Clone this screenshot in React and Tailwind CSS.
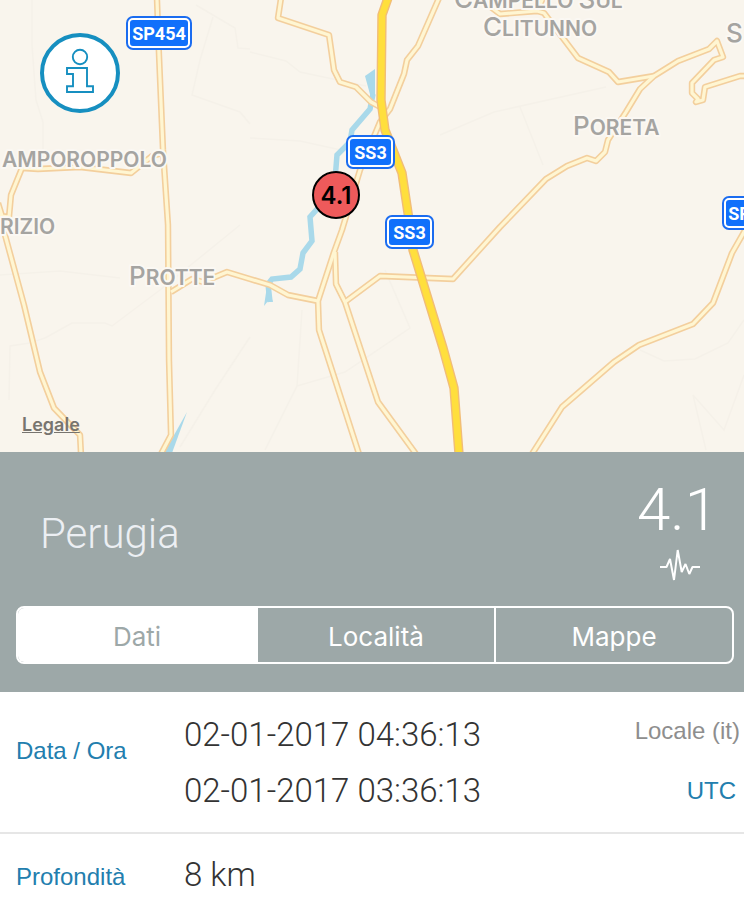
import { useState } from 'react';

const minorRoads = [
  'M157 0 L159 55 L163 150 L168 225 L169 360 L171 435 L161 454',
  'M163 153 L152 156 L131 173 L80 167 L38 169 L22 168 L11 195 L9 217 L2 216 L-2 203',
  'M-2 206 L5 235 L24 305 L40 372 L54 408 L80 435 L81 454',
  'M171 292 L192 279 L203 282 L227 272 L250 279 L270 285 L288 295 L318 301',
  'M281 -2 L278 18 L329 35 L334 70 L340 82 L356 87 L371 102 L384 109',
  'M439 -2 L418 46 L407 60 L404 74 L390 109 L380 122 L360 170 L342 230 L334 252 L318 301 L319 330 L359 454',
  'M335 252 L336 284 L345 302 L378 402 L416 454',
  'M345 302 L380 276 L453 279 L500 227 L546 179 L567 166 L587 158 L596 161 L605 152 L608 140 L626 112 L640 89 L654 76 L678 61 L709 49 L717 41 L723 57 L714 60 L692 83 L692 93 L698 99 L696 102 L703 100 L705 87 L740 76 L748 76',
  'M488 5 L500 14 L537 11 L543 -2 M537 11 L544 13 L578 58 L609 72 L618 82 L654 76',
  'M748 225 L732 253 L713 303 L693 324 L639 345 L614 362 L562 407 L532 454',
];

const highway =
  'M388 -2 L382 15 L381 100 L385 130 L402 173 L408 213 L413 250 L443 348 L454 388 L459 454';

const tracks = [
  'M32 0 L32 45 L36 100 L43 122 L43 160',
  'M196 5 L235 28 L238 48 L250 49 M213 17 L200 60 L192 95 L240 112 L250 124',
  'M250 52 L286 61 L300 72 L366 86',
  'M250 138 L300 141 L350 152',
  'M0 275 L60 271 L120 278 M45 338 L72 323 L105 323 L112 326 L160 290 L240 225',
  'M9 400 L10 346 L30 343 L45 338',
  'M180 447 L215 390 L250 337',
  'M265 450 L297 386 L302 310 M297 386 L345 372 L410 328 L385 270',
  'M440 135 L494 112 L606 87 M520 107 L543 165',
  'M640 350 L664 361 L695 359 L728 343 L744 320',
  'M693 395 L724 430 L744 375 M693 395 L706 450',
];

function Label({ x, y, children }) {
  return (
    <text
      x={x}
      y={y}
      className="fill-[#a5a4a1] stroke-[#fbf8f3] stroke-4 text-[21px] font-semibold"
      paintOrder="stroke"
      strokeLinejoin="round"
    >
      {children}
    </text>
  );
}

function Initial({ children }) {
  return <tspan className="text-[26px] font-medium">{children}</tspan>;
}

function Shield({ x, y, width, children }) {
  return (
    <g>
      <rect x={x} y={y} width={width} height="34" rx="7" fill="#1b6cf0" />
      <rect x={x + 3} y={y + 3} width={width - 6} height="28" rx="4" fill="#1170fb" stroke="#fff" strokeWidth="2" />
      <text
        x={x + width / 2}
        y={y + 24}
        textAnchor="middle"
        className="fill-white font-['Liberation_Sans_Narrow','Roboto',sans-serif] text-[18px] font-bold"
      >
        {children}
      </text>
    </g>
  );
}

function EarthquakeMap() {
  return (
    <section className="relative overflow-hidden bg-[#f9f5ed]">
      <svg viewBox="0 0 744 452" className="block h-auto w-full font-['Inter',sans-serif]">
        <g fill="none" stroke="#f5f1e9" strokeWidth="1.5">
          {tracks.map((d) => <path key={d} d={d} />)}
        </g>
        <g fill="#a9d9ea">
          <path d="M365 76 L375 69 L375 98 L371 98 Z" />
          <path d="M187 412 L172 453 L164 453 Z" />
          <path d="M267 286 L273 302 L268 301 L264 306 Z" />
        </g>
        <path
          d="M373 94 L370 109 L352 130 L350 142 L337 155 L335 180 L318 208 L310 217 L312 241 L303 253 L300 269 L291 277 L272 279 L268 284 L270 302"
          fill="none" stroke="#a9d9ea" strokeWidth="5.5"
        />
        <g fill="none" stroke="#f3cf9d" strokeWidth="6.4" strokeLinejoin="round">
          {minorRoads.map((d) => <path key={d} d={d} />)}
        </g>
        <g fill="none" stroke="#fff6d2" strokeWidth="3.2" strokeLinejoin="round">
          {minorRoads.map((d) => <path key={d} d={d} />)}
        </g>
        <path d={highway} fill="none" stroke="#f1bd78" strokeWidth="9.4" strokeLinejoin="round" />
        <path d={highway} fill="none" stroke="#ffdf3d" strokeWidth="6.6" strokeLinejoin="round" />

        <Label x="454" y="8"><Initial>C</Initial>AMPELLO <Initial>S</Initial>UL</Label>
        <Label x="483" y="36"><Initial>C</Initial>LITUNNO</Label>
        <Label x="573" y="135"><Initial>P</Initial>ORETA</Label>
        <Label x="129" y="285"><Initial>P</Initial>ROTTE</Label>
        <Label x="726" y="42"><Initial>S</Initial></Label>
        <Label x="2" y="167">AMPOROPPOLO</Label>
        <Label x="0" y="234">RIZIO</Label>

        <Shield x={126} y={16} width={66}>SP454</Shield>
        <Shield x={346} y={135} width={49}>SS3</Shield>
        <Shield x={385} y={215} width={49}>SS3</Shield>
        <Shield x={722} y={196} width={66}>SP457</Shield>

        <circle cx="336" cy="195" r="23" fill="#ee5a5b" stroke="#000" strokeWidth="2" />
        <text x="336" y="204" textAnchor="middle" className="fill-black text-[24px] font-semibold">4.1</text>
      </svg>
      <button type="button" aria-label="Informazioni" className="absolute top-8 left-10 mt-px size-20">
        <svg viewBox="0 0 80 80" className="size-20" fill="none" stroke="#168fc0">
          <circle cx="40" cy="40" r="38" fill="#fff" strokeWidth="4" />
          <circle cx="40" cy="24" r="7.2" strokeWidth="1.9" />
          <path d="M27 35 H47 V53.3 H53 V59 H27 V53.3 H33 V41 H27 Z" strokeWidth="1.9" />
        </svg>
      </button>
      <a
        href="#legale"
        className="absolute bottom-[15px] left-[22px] font-['Inter',sans-serif] text-[18px] leading-6 font-semibold text-[#77746f] underline"
      >
        Legale
      </a>
    </section>
  );
}

const tabs = ['Dati', 'Località', 'Mappe'];

function EventHeader() {
  const [active, setActive] = useState('Dati');
  return (
    <header className="bg-[#9da8a8] pt-7 pr-[10px] pb-7 pl-4">
      <div className="flex h-[126px] items-start justify-between pr-4 pl-6">
        <h1 className="pt-7 font-['Roboto',sans-serif] text-[42px] leading-[52px] font-light text-[#eceff3]">Perugia</h1>
        <div className="flex flex-col items-end">
          <p className="font-['Roboto',sans-serif] text-[60px] leading-[60px] font-light text-white">4.1</p>
          <svg viewBox="0 0 40 34" className="mt-2 mr-[18px] h-[34px] w-10" fill="none" stroke="#fff" strokeWidth="2" strokeLinejoin="bevel">
            <path d="M0 19 H6.5 L10 11 L14 32 L17.7 2 L21.7 24 L25.5 16 L29.3 26 L32.5 19 H40" />
          </svg>
        </div>
      </div>
      <div role="tablist" className="grid h-[58px] grid-cols-3 overflow-hidden rounded-lg border-2 border-white font-['Inter',sans-serif] text-[26px]">
        {tabs.map((tab) => (
          <button
            key={tab}
            type="button"
            role="tab"
            aria-selected={active === tab}
            onClick={() => setActive(tab)}
            className={
              active === tab
                ? 'border-l-2 border-white bg-white pt-0.5 text-[#9da8a8] first:border-l-0'
                : 'border-l-2 border-white pt-0.5 text-white first:border-l-0'
            }
          >
            {tab}
          </button>
        ))}
      </div>
    </header>
  );
}

function EventDetails() {
  return (
    <dl className="font-['Liberation_Sans',Arial,sans-serif] text-[24px]">
      <div className="flex h-[142px] border-b-2 border-[#e6e6e6] pl-4">
        <dt className="w-[168px] pt-11 leading-[30px] text-[#227eae]">Data / Ora</dt>
        <dd className="flex flex-1 flex-col pt-4">
          <div className="flex h-14 justify-between">
            <span className="font-['Roboto',sans-serif] text-[33px] leading-[54px] font-light text-[#333]">02-01-2017 04:36:13</span>
            <span className="pr-1 leading-[46px] text-[#8e8e8e]">Locale (it)</span>
          </div>
          <div className="flex h-14 justify-between">
            <span className="font-['Roboto',sans-serif] text-[33px] leading-[54px] font-light text-[#333]">02-01-2017 03:36:13</span>
            <span className="pr-2 leading-[54px] text-[#227eae]">UTC</span>
          </div>
        </dd>
      </div>
      <div className="flex h-20 pl-4">
        <dt className="w-[168px] pt-7 leading-[30px] text-[#227eae]">Profondità</dt>
        <dd className="pt-3.5 font-['Roboto',sans-serif] text-[33px] leading-[54px] font-light text-[#333]">8 km</dd>
      </div>
    </dl>
  );
}

export default function App() {
  return (
    <main className="min-h-screen w-full bg-white">
      <EarthquakeMap />
      <EventHeader />
      <EventDetails />
    </main>
  );
}
